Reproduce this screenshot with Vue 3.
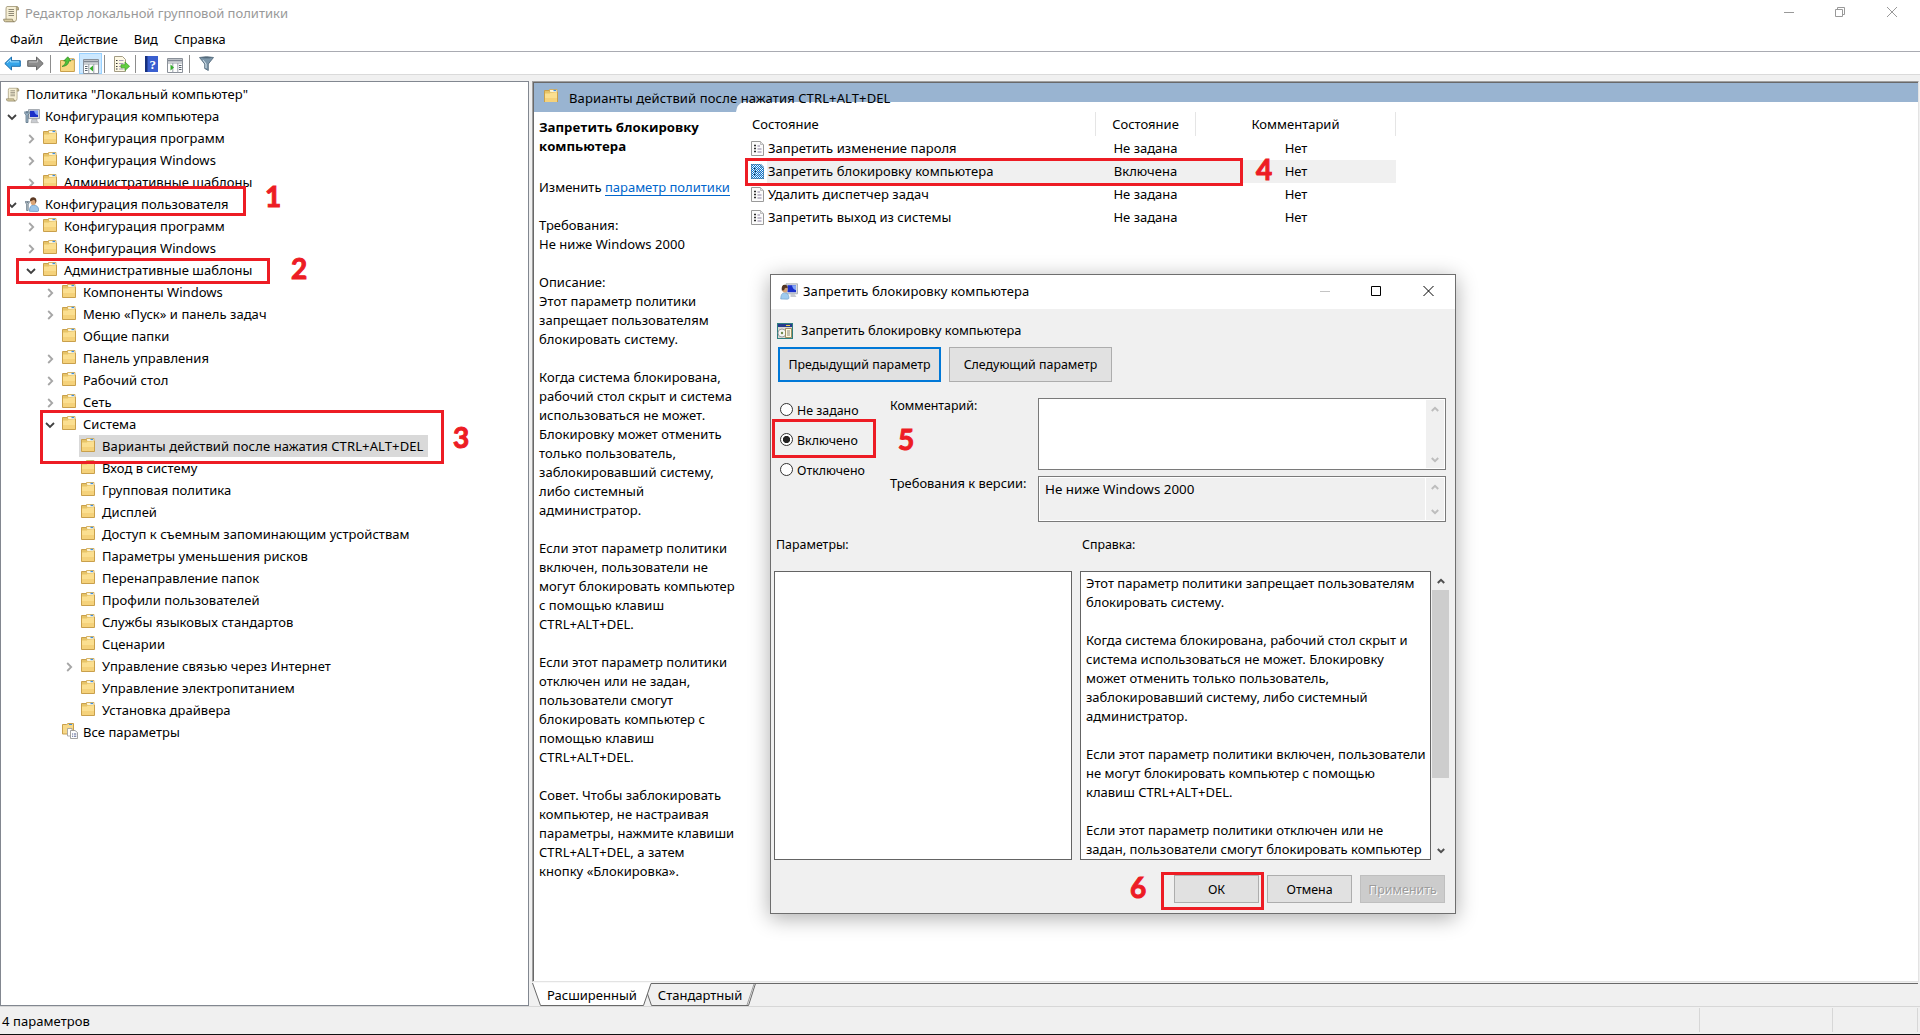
<template>
    <div class="window">
        <!-- Icon sprites -->
        <svg class="sprites" width="0" height="0">
            <symbol id="scroll" viewBox="0 0 16 18">
                <path d="M4 1.500h9.500q2 0 2 2v1.300h-2V14q0 2.500-2 2.500H3V4q0-2.500 1-2.500z" fill="#f6efd5" stroke="#9c9170" stroke-width=".8" />
                <path d="M13.400 1.500q2.100.2 2.100 3.200h-2.200z" fill="#c9bd92" stroke="#8d8262" stroke-width=".6" />
                <path d="M.6 14.200h8.800q0 2.600 2 2.600H2.500q-1.900 0-1.900-2.600z" fill="#d9cda3" stroke="#8d8262" stroke-width=".8" />
                <path d="M5.500 4.500h5.500M5.500 6.500h5.500M5.500 8.500h5.500M5.500 10.500h5.500" stroke="#8f8a78" stroke-width="1" />
            </symbol>
            <symbol id="folder" viewBox="0 0 14 14">
                <path d="M.5 1.500h5.200l1 1.500h6.800v10.500H.5z" fill="#e7c467" stroke="#c9a04c" />
                <path d="M5.500 2.800V.5h7.500v3" fill="#fff6d8" stroke="#d3ab58" stroke-width=".9" />
                <path d="M9.500 1.500h2.500" stroke="#3f8fe0" stroke-width="1.300" />
                <path d="M1 4.500h4.800l.8-1h6.400v9.500H1z" fill="#fbdf90" />
                <path d="M1 9h12v4H1z" fill="#f5d27b" />
            </symbol>
            <symbol id="allset" viewBox="0 0 16 16">
                <path d="M.5 1.500h4L6 .5h5.500v10.500H.5z" fill="#f7d98a" stroke="#c9a04c" />
                <path d="M7 1.500h3" stroke="#3f8fe0" />
                <path d="M5.500 5.500h4.500v7.500H5.500z" fill="#fff" stroke="#999" stroke-width=".8" />
                <path d="M8.500 7.500h4.500l2.500 2v6h-7z" fill="#fff" stroke="#8c8c8c" stroke-width=".8" />
                <path d="M10 11h1.200M12 11h2.300M10 13.200h1.200M12 13.200h2.300" stroke="#4e5a8c" />
            </symbol>
            <symbol id="pc" viewBox="0 0 16 15">
                <path d="M4.500.6h11v9h-11z" fill="#d5d8dc" stroke="#8b929c" stroke-width=".8" />
                <path d="M6 1.800h8v6.200H6z" fill="#1b2fc8" />
                <path d="M10 1.800h4v4.200q-3 0-4-4.200z" fill="#7fa0f5" />
                <path d="M8 10h5v2.200l1.500 1.500H7z" fill="#c9ccd1" stroke="#9a9a9a" stroke-width=".5" />
                <path d="M.8 2.500v2.300l1.200 1v7.700h2V5.800l1.200-1V2.500M2.300 2v2h1.400V2" fill="#9fb6c8" stroke="#5a7184" stroke-width=".8" />
            </symbol>
            <symbol id="user" viewBox="0 0 14 15">
                <path d="M4.500 14.300q-.3-5.800 4-6.300 5 .4 5.200 5 0 1.500-1.500 1.500z" fill="#9cc6ea" stroke="#5d8fbb" stroke-width=".7" />
                <ellipse cx="8.300" cy="4.700" rx="2.700" ry="3.400" fill="#d9a577" />
                <path d="M5 4.500q-.3-4.200 3.500-4.200 3.300.3 2.900 4.500l-.9 1.600q.2-3-1.500-3.600z" fill="#5c3a24" />
                <path d="M.6 4v2l1 1v6.500h1.600V7l1-1V4M1.900 4v1.500h1V4" fill="#b8c4cc" stroke="#5a6b78" stroke-width=".7" />
            </symbol>
            <symbol id="userpc" viewBox="0 0 18 17">
                <path d="M6 .8h11.500v10H6z" fill="#d8dbe0" stroke="#9ea4ac" stroke-width=".8" />
                <path d="M7.500 2.200h8.500v7H7.500z" fill="#1a30cc" />
                <path d="M12 2.200h4v5q-3.500-1-4-5z" fill="#83a5f5" />
                <path d="M10.500 11h4l2 3h-6z" fill="#c8cbd0" />
                <path d="M.7 16q0-6 3.800-6.300 4.500.3 4.500 5.300 0 1-1.500 1.200z" fill="#9fcbef" stroke="#6d9cc7" stroke-width=".6" />
                <ellipse cx="4.800" cy="6" rx="2.700" ry="3.600" fill="#d7a173" />
                <path d="M1.800 7.500q-.8-5.800 3-5.800 3.200.3 2.800 3.600-3-1.800-3.500 2z" fill="#533724" />
            </symbol>
            <symbol id="setting" viewBox="0 0 13 15">
                <path d="M.5.5h9l3 3v11H.5z" fill="#fbfbfb" stroke="#9a9a9a" />
                <path d="M9.500.5v3h3" fill="#e3e3e3" stroke="#b0b0b0" stroke-width=".8" />
                <path d="M3 4.500h2M3 7.500h2M3 10.500h2" stroke="#2f2f2f" stroke-width="1.600" />
                <path d="M6.500 5h2.500M6.500 8h4M6.500 11h4" stroke="#8b80a0" />
            </symbol>
            <symbol id="panel" viewBox="0 0 16 15">
                <path d="M.5.5h15v14H.5z" fill="#fdfdfd" stroke="#8a9099" />
                <path d="M1 2.500h14" stroke="#7f8792" stroke-width="2" />
                <path d="M1 5h14M5.800 5v9.500M10.800 5v9.500" stroke="#9aa1aa" />
            </symbol>
            <pattern id="check" width="2" height="2" patternUnits="userSpaceOnUse">
                <path d="M0 0h1v1H0zM1 1h1v1H1z" fill="#0078d7" />
            </pattern>
        </svg>

        <header class="titlebar">
            <svg class="i-title"><use href="#scroll" /></svg>
            <span class="title">Редактор локальной групповой политики</span>
            <svg class="caption" width="114" height="12" fill="none" stroke="#999">
                <path d="M0 6.500h10M51.500 3.500h7v7h-7zM53.500 3.500v-2h7v7h-2M103 1l10 10M113 1l-10 10" />
            </svg>
        </header>

        <nav class="menubar">
            <span v-for="m in menu" :key="m">{{ m }}</span>
        </nav>

        <div class="toolbar">
            <svg width="17" height="15" viewBox="0 0 17 15">
                <path d="M.8 7.500L7.500 1v3.700h8.800v5.600H7.500V14z" fill="#35a5ea" stroke="#1d6fae" />
                <path d="M3 7l3.500-3.300v2.200H15" fill="none" stroke="#9ddcff" />
            </svg>
            <svg class="t-fwd" width="17" height="15" viewBox="0 0 17 15">
                <path d="M16.200 7.500L9.500 1v3.700H.7v5.600h8.800V14z" fill="#8d8d8d" stroke="#666" />
                <path d="M2 6h8.500V3.700" fill="none" stroke="#c2c2c2" />
            </svg>
            <i class="sep"></i>
            <svg class="t-up" width="15" height="16" viewBox="0 0 15 16">
                <path d="M.5 4.500h5l1-1.500h7.900v12.500H.5z" fill="#f8d882" stroke="#c9a04c" />
                <path d="M9 2.500h4.500v2H9z" fill="#fff3cf" stroke="#d3ab58" stroke-width=".7" />
                <path d="M11.500 3.500h2" stroke="#3f8fe0" />
                <path d="M2 10.500Q5.500 9 6 5H3.700L7.800.8 11 5H8.800Q8.500 10 2 10.500z" fill="#4fc23a" stroke="#2d8a22" stroke-width=".7" />
            </svg>
            <span class="t-on">
                <svg width="16" height="15" viewBox="0 0 16 15">
                    <use href="#panel" />
                    <path d="M2 7.500h2.500M2 9.500h2.500M2 11.500h2.500" stroke="#59636f" />
                    <path d="M10 6.500v6L6.500 9.500z" fill="#35ad2b" />
                </svg>
            </span>
            <i class="sep t-s2"></i>
            <svg class="t-exp" width="17" height="16" viewBox="0 0 17 16">
                <path d="M1.500.5h8l3 3v12h-11z" fill="#fdf8e4" stroke="#a39c84" />
                <path d="M3 4.500h1.500M3 7.500h1.500M3 10.500h1.500M3 13h1.500" stroke="#333" />
                <path d="M6 4.500h4.500M6 7.500h4.500M6 10.500h3M6 13h4.500" stroke="#a89fb8" />
                <path d="M8 8.700h4V6l4.600 4.300-4.600 4.200v-2.700H8z" fill="#62d03f" stroke="#3c9a2b" stroke-width=".7" />
            </svg>
            <i class="sep t-s3"></i>
            <svg class="t-help" width="13" height="16" viewBox="0 0 13 16">
                <path d="M0 0h13v16H0z" fill="#3a5fd0" />
                <path d="M0 0h2.500v16H0z" fill="#16307f" />
                <text x="7.700" y="13" class="help-q">?</text>
            </svg>
            <svg class="t-show" width="16" height="15" viewBox="0 0 16 15">
                <use href="#panel" />
                <path d="M12 7.500h2.500M12 9.500h2.500M12 11.500h2.500" stroke="#59636f" />
                <path d="M3.500 6.500v6L7 9.500z" fill="#35ad2b" />
            </svg>
            <i class="sep t-s4"></i>
            <svg class="t-filter" width="15" height="15" viewBox="0 0 15 15">
                <path d="M.5 1.500q7-1.700 14 0L9.300 8v6.500l-3.600-2V8z" fill="#7d97aa" stroke="#4b6273" stroke-width=".8" />
                <path d="M1.800 1.700q5.500-1 11.400 0-5.500 1.300-11.400 0z" fill="#45596a" />
                <path d="M4.200 4.200L7 8v4" fill="none" stroke="#dbe8f0" />
            </svg>
        </div>

        <main class="body">
            <!-- Policy tree -->
            <section class="tree">
                <div v-for="(n, i) in tree" :key="i" class="node" :class="['lv' + n[0], { sel: n[4] }]">
                    <svg class="chev" width="10" height="10" viewBox="0 0 10 10" fill="none">
                        <path v-if="n[1] === 'open'" d="M1 3l4 4 4-4" stroke="#404040" stroke-width="1.800" />
                        <path v-if="n[1] === 'shut'" d="M3.200 1l4 4-4 4" stroke="#a6a6a6" stroke-width="1.800" />
                    </svg>
                    <svg class="ico" :class="'ico-' + n[2]"><use :href="'#' + n[2]" /></svg>
                    <span class="label">{{ n[3] }}</span>
                </div>
            </section>

            <section class="pane">
                <div class="pane-main">
                    <div class="band">
                        <svg class="ico-folder"><use href="#folder" /></svg>
                        <span>Варианты действий после нажатия CTRL+ALT+DEL</span>
                    </div>
                    <div class="cols">
                        <div class="info">
                            <svg class="corner" width="7" height="10"><path d="M0 0h7Q1 2 0 10z" fill="#99b4d1" /></svg>
                            <h2>Запретить блокировку<br>компьютера</h2>
                            <p class="edit">Изменить <a>параметр политики</a></p>
                            <p class="desc">{{ description }}</p>
                        </div>
                        <div class="list">
                            <div class="row head">
                                <span class="c1">Состояние</span>
                                <span class="c2">Состояние</span>
                                <span class="c3">Комментарий</span>
                            </div>
                            <div v-for="p in policies" :key="p.name" class="row" :class="{ active: p.active }">
                                <span class="c1">
                                    <svg class="ico-setting" viewBox="0 0 13 15">
                                        <use href="#setting" />
                                        <path v-if="p.active" d="M0 0h10l3 3v12H0z" fill="url(#check)" />
                                    </svg>
                                    <b>{{ p.name }}</b>
                                </span>
                                <span class="c2">{{ p.state }}</span>
                                <span class="c3">Нет</span>
                            </div>
                        </div>
                    </div>
                </div>
                <div class="tabs">
                    <svg class="tab-lines" width="1387" height="25" fill="none">
                        <path d="M1 1.500L8.500 23.500H111.500L119 .500H1z" fill="#fff" />
                        <path d="M119 1.500L115 12L119.500 23.500H216L223 1.500z" fill="#f0f0f0" />
                        <path d="M.5 1L8.500 23.500H111.500L119 1.500H1386M115.500 12L119.500 23.500H216.500L223.500 1.500" stroke="#696969" />
                        <path d="M215 23L222 2" stroke="#a0a0a0" />
                    </svg>
                    <span>Расширенный</span>
                    <span>Стандартный</span>
                </div>
            </section>
        </main>

        <footer class="status">
            <span class="st-text">4 параметров</span>
            <i class="st1"></i>
            <i class="st2"></i>
        </footer>

        <!-- Policy dialog -->
        <div class="dialog">
            <div class="d-title">
                <svg width="18" height="17"><use href="#userpc" /></svg>
                <span>Запретить блокировку компьютера</span>
                <svg class="d-caption" width="114" height="12" fill="none">
                    <path d="M0 6.500h10" stroke="#c4c4c4" />
                    <path d="M51.500 1.500h9v9h-9zM103.500 1l10 10M113.500 1l-10 10" stroke="#000" />
                </svg>
            </div>
            <div class="d-name">
                <svg width="16" height="16" viewBox="0 0 16 16">
                    <path d="M0 0h16v16H0z" fill="#2f7f80" />
                    <path d="M1 2h14v13H1z" fill="#d9d7d2" />
                    <path d="M1 1h14v3H1z" fill="#283a8c" />
                    <path d="M9 2.500h4" stroke="#e9d44a" />
                    <circle cx="5" cy="10" r="4" fill="#f5f5f5" stroke="#8b8b8b" stroke-width=".8" />
                    <circle cx="5" cy="10" r="1.200" fill="#6c8a4a" />
                    <path d="M8.500 5.500h6v9h-6z" fill="#fff8dc" stroke="#8c7a45" stroke-width=".8" />
                    <path d="M10 8h3M10 10h3M10 12h3" stroke="#6b6b6b" stroke-width=".8" />
                </svg>
                <span>Запретить блокировку компьютера</span>
            </div>
            <div class="d-nav">
                <button type="button" class="btn focus">Предыдущий параметр</button>
                <button type="button" class="btn">Следующий параметр</button>
            </div>
            <div class="d-form">
                <div class="radios">
                    <label v-for="r in radios" :key="r"><i :class="{ on: r === 'Включено' }"></i>{{ r }}</label>
                </div>
                <div class="d-fields">
                    <div class="field f-comment">
                        <span>Комментарий:</span>
                        <div class="area">
                            <div class="scroll"><svg width="8" height="6"><path d="M.8 5L4 1.800 7.200 5" /></svg><svg width="8" height="6"><path d="M.8 1L4 4.200 7.200 1" /></svg></div>
                        </div>
                    </div>
                    <div class="field f-req">
                        <span>Требования к версии:</span>
                        <div class="area ro">
                            <em>Не ниже Windows 2000</em>
                            <div class="scroll"><svg width="8" height="6"><path d="M.8 5L4 1.800 7.200 5" /></svg><svg width="8" height="6"><path d="M.8 1L4 4.200 7.200 1" /></svg></div>
                        </div>
                    </div>
                </div>
            </div>
            <div class="d-heads">
                <span>Параметры:</span>
                <span>Справка:</span>
            </div>
            <div class="d-boxes">
                <div class="box-left"></div>
                <div class="box-help">{{ help }}</div>
                <div class="scroll big">
                    <svg width="8" height="6"><path d="M.8 5L4 1.800 7.200 5" /></svg>
                    <div class="thumb"></div>
                    <svg width="8" height="6"><path d="M.8 1L4 4.200 7.200 1" /></svg>
                </div>
            </div>
            <div class="d-actions">
                <button type="button" class="btn">ОК</button>
                <button type="button" class="btn">Отмена</button>
                <button type="button" class="btn off">Применить</button>
            </div>
        </div>

        <!-- Numbered step marks over the window -->
        <template v-for="n in 6" :key="n">
            <div class="mark" :class="'mark' + n"></div>
            <div class="num" :class="'num' + n">{{ n }}</div>
        </template>
    </div>
</template>

<script setup>
const menu = ['Файл', 'Действие', 'Вид', 'Справка'];

// [level, chevron, icon, label, selected]
const tree = [
    [0, '', 'scroll', 'Политика "Локальный компьютер"'],
    [1, 'open', 'pc', 'Конфигурация компьютера'],
    [2, 'shut', 'folder', 'Конфигурация программ'],
    [2, 'shut', 'folder', 'Конфигурация Windows'],
    [2, 'shut', 'folder', 'Административные шаблоны'],
    [1, 'open', 'user', 'Конфигурация пользователя'],
    [2, 'shut', 'folder', 'Конфигурация программ'],
    [2, 'shut', 'folder', 'Конфигурация Windows'],
    [2, 'open', 'folder', 'Административные шаблоны'],
    [3, 'shut', 'folder', 'Компоненты Windows'],
    [3, 'shut', 'folder', 'Меню «Пуск» и панель задач'],
    [3, '', 'folder', 'Общие папки'],
    [3, 'shut', 'folder', 'Панель управления'],
    [3, 'shut', 'folder', 'Рабочий стол'],
    [3, 'shut', 'folder', 'Сеть'],
    [3, 'open', 'folder', 'Система'],
    [4, '', 'folder', 'Варианты действий после нажатия CTRL+ALT+DEL', true],
    [4, '', 'folder', 'Вход в систему'],
    [4, '', 'folder', 'Групповая политика'],
    [4, '', 'folder', 'Дисплей'],
    [4, '', 'folder', 'Доступ к съемным запоминающим устройствам'],
    [4, '', 'folder', 'Параметры уменьшения рисков'],
    [4, '', 'folder', 'Перенаправление папок'],
    [4, '', 'folder', 'Профили пользователей'],
    [4, '', 'folder', 'Службы языковых стандартов'],
    [4, '', 'folder', 'Сценарии'],
    [4, 'shut', 'folder', 'Управление связью через Интернет'],
    [4, '', 'folder', 'Управление электропитанием'],
    [4, '', 'folder', 'Установка драйвера'],
    [3, '', 'allset', 'Все параметры']
];

const policies = [
    { name: 'Запретить изменение пароля', state: 'Не задана' },
    { name: 'Запретить блокировку компьютера', state: 'Включена', active: true },
    { name: 'Удалить диспетчер задач', state: 'Не задана' },
    { name: 'Запретить выход из системы', state: 'Не задана' }
];

const radios = ['Не задано', 'Включено', 'Отключено'];

const description = `Требования:
Не ниже Windows 2000

Описание:
Этот параметр политики
запрещает пользователям
блокировать систему.

Когда система блокирована,
рабочий стол скрыт и система
использоваться не может.
Блокировку может отменить
только пользователь,
заблокировавший систему,
либо системный
администратор.

Если этот параметр политики
включен, пользователи не
могут блокировать компьютер
с помощью клавиш
CTRL+ALT+DEL.

Если этот параметр политики
отключен или не задан,
пользователи смогут
блокировать компьютер с
помощью клавиш
CTRL+ALT+DEL.

Совет. Чтобы заблокировать
компьютер, не настраивая
параметры, нажмите клавиши
CTRL+ALT+DEL, а затем
кнопку «Блокировка».`;

const help = `Этот параметр политики запрещает пользователям
блокировать систему.

Когда система блокирована, рабочий стол скрыт и
система использоваться не может. Блокировку
может отменить только пользователь,
заблокировавший систему, либо системный
администратор.

Если этот параметр политики включен, пользователи
не могут блокировать компьютер с помощью
клавиш CTRL+ALT+DEL.

Если этот параметр политики отключен или не
задан, пользователи смогут блокировать компьютер`;
</script>

<style>
body { margin: 0; overflow: hidden; }
</style>

<style scoped>
* { box-sizing: border-box; }
.window {
    position: relative;
    display: flex;
    flex-direction: column;
    width: 1920px;
    height: 1035px;
    background: #f0f0f0;
    color: #000;
    font: 13px/19px "Noto Sans", "Open Sans", sans-serif;
    white-space: nowrap;
    overflow: hidden;
}
.sprites { position: absolute; }
svg { display: block; flex: none; }
p, h2 { margin: 0; }

/* Title, menu, toolbar */
.titlebar {
    display: flex;
    align-items: flex-start;
    height: 28px;
    padding: 5px 22px 0 3px;
    background: #fff;
    color: #999;
}
.i-title { width: 16px; height: 18px; }
.title { margin: -1px 0 0 6px; }
.caption { margin: 1px 0 0 auto; }
.menubar {
    display: flex;
    gap: 16px;
    height: 24px;
    padding: 2px 10px 0;
    background: #fff;
    border-bottom: 1px solid #a9abb2;
    font-size: 12.800px;
}
.toolbar {
    display: flex;
    align-items: center;
    height: 23px;
    padding: 1px 0 0 4px;
    background: #fff;
    border-bottom: 1px solid #dadada;
}
.sep { width: 1px; height: 18px; margin-left: 6px; background: #8d8d8d; }
.t-fwd { margin-left: 6px; }
.t-up { margin-left: 9px; }
.t-on {
    width: 23px;
    height: 21px;
    margin-left: 4px;
    padding: 5px 0 0 3px;
    background: #cce8ff;
    border: 1px solid #99d1ff;
}
.t-s2 { margin-left: 2px; }
.t-exp { margin-left: 8px; }
.t-s3 { margin-left: 5px; }
.t-help { margin-left: 9px; }
.help-q { font: 700 13px "Liberation Serif", serif; fill: #fff; text-anchor: middle; }
.t-show { margin: 3px 0 0 9px; }
.t-s4 { margin-left: 6px; }
.t-filter { margin-left: 9px; }

/* Tree */
.body { display: flex; height: 931px; padding-top: 6px; }
.tree {
    width: 529px;
    height: 925px;
    padding-top: 1px;
    background: #fff;
    border: 1px solid #828790;
}
.node { display: flex; align-items: center; height: 22px; }
.chev { margin: 1px 0 0 6px; }
.ico { margin-left: 7px; }
.label { margin-left: 7px; letter-spacing: .04px; }
.lv0 .chev { display: none; }
.lv0 .ico { margin-left: 4px; }
.lv0 .label { margin-left: 6px; letter-spacing: .08px; }
.lv2 { padding-left: 19px; }
.lv3 { padding-left: 38px; }
.lv4 { padding-left: 57px; }
.ico-scroll { width: 15px; height: 15px; }
.ico-folder { width: 14px; height: 14px; margin-top: -3px; }
.ico-pc { width: 16px; height: 15px; }
.ico-pc + .label { margin-left: 5px; }
.ico-user { width: 14px; height: 15px; margin-left: 8px; }
.ico-user + .label { margin-left: 6px; }
.ico-allset { width: 16px; height: 16px; margin-top: -3px; }
.ico-allset + .label { margin-left: 5px; }
.lv4.sel {
    width: 349px;
    margin-left: 78px;
    padding-left: 2px;
    background: #d9d9d9;
}
.sel .chev { display: none; }
.sel .ico { margin-left: 0; }
.sel .label, .band { letter-spacing: .12px; }

/* Right pane */
.pane { width: 1387px; margin-left: 3px; }
.pane-main {
    height: 901px;
    background: #fff;
    border: 1px solid #a0a0a0;
    border-right-color: #e3e3e3;
    border-bottom-color: #e3e3e3;
    box-shadow: inset 1px 1px #696969;
    padding: 1px 0 0 1px;
}
.band { display: flex; height: 19px; padding: 6px 0 0 10px; background: #99b4d1; }
.band .ico-folder { margin-top: 0; }
.band span { position: relative; margin-left: 11px; z-index: 1; }
.cols { display: flex; }
.info {
    position: relative;
    width: 202px;
    margin-right: 7px;
    padding: 6px 0 0 5px;
    border-top: 10px solid #99b4d1;
}
.corner { position: absolute; top: -10px; left: 202px; }
.info h2 { font: 700 13.2px/19px "Open Sans", sans-serif; }
.edit { margin-top: 22px; }
.edit a { color: #0066cc; border-bottom: 1px solid #0066cc; display: inline-block; line-height: 15px; }
.desc { margin-top: 19px; white-space: pre; letter-spacing: .04px; }
.list { width: 653px; padding-top: 10px; }
.row { display: flex; height: 23px; align-items: center; }
.row b { font-weight: 400; letter-spacing: .05px; }
.c1 { display: flex; align-items: center; gap: 4px; width: 352px; padding-left: 8px; }
.c2 { width: 101px; text-align: center; }
.c3 { width: 200px; text-align: center; }
.head { height: 24px; margin-bottom: 1px; }
.head span { height: 24px; line-height: 24px; border-right: 1px solid #e5e5e5; }
.head .c1 { padding-left: 9px; width: 353px; }
.head .c2 { width: 100px; }
.active { background: linear-gradient(#f0f0f0, #f0f0f0) 24px 0 no-repeat; }
.ico-setting { width: 13px; height: 15px; margin-top: -1px; }

/* Tabs */
.tabs {
    position: relative;
    display: flex;
    gap: 21px;
    height: 24px;
    padding: 4px 0 0 15px;
}
.tab-lines { position: absolute; left: 0; top: 0; }
.tabs span { position: relative; }

/* Status bar */
.status {
    position: relative;
    display: flex;
    height: 29px;
    border-top: 1px solid #d7d7d7;
    border-bottom: 1px solid #111;
    padding: 1px 2px 2px 2px;
}
.st-text { width: 1697px; padding-top: 4px; letter-spacing: .08px; }
.status i { border-left: 1px solid #d7d7d7; }
.st1 { width: 133px; }
.st2 { width: 86px; border-right: 1px solid #d7d7d7; }

/* Dialog */
.dialog {
    position: absolute;
    left: 770px;
    top: 274px;
    width: 686px;
    height: 640px;
    background: #f0f0f0;
    border: 1px solid #6e6e6e;
    box-shadow: 0 4px 20px rgba(0, 0, 0, .33);
    font-size: 12.4px;
}
.d-title {
    display: flex;
    align-items: flex-start;
    height: 34px;
    padding: 8px 21px 0 9px;
    background: #fff;
    font-size: 13px;
}
.d-title span { margin: -1px 0 0 5px; letter-spacing: .08px; }
.d-caption { margin: 2px 0 0 auto; }
.d-name { display: flex; height: 38px; padding: 14px 0 0 6px; font-size: 12.800px; }
.d-name span { margin: -2px 0 0 8px; }
.d-nav { display: flex; gap: 8px; padding-left: 7px; }
.btn {
    width: 163px;
    height: 35px;
    padding: 0;
    background: #e1e1e1;
    border: 1px solid #adadad;
    font: inherit;
    color: #000;
}
.btn.focus { border: 2px solid #0078d7; }
.d-form { display: flex; height: 147px; padding-top: 16px; }
.radios { width: 119px; padding: 2px 0 0 9px; }
.radios label { display: flex; align-items: center; height: 30px; margin-top: -5px; margin-bottom: 5px; gap: 4px; }
.radios i { width: 13px; height: 13px; margin-top: -1px; border: 1px solid #333; border-radius: 50%; background: #fff; }
.radios i.on { background: radial-gradient(circle, #222 3.300px, #fff 3.900px); }
.field { display: flex; justify-content: space-between; width: 556px; }
.f-comment { height: 78px; }
.area {
    display: flex;
    justify-content: flex-end;
    width: 408px;
    height: 72px;
    padding: 1px;
    background: #fff;
    border: 1px solid #7a7a7a;
}
.field > span { margin-top: -2px; }
.f-req > span { font-size: 12.900px; }
.f-req .area { height: 46px; }
.area em { flex: 1; padding: 2px 0 0 5px; background: #f0f0f0; font-style: normal; font-size: 13.400px; }
.area.ro .scroll { margin-left: 1px; }
.scroll {
    display: flex;
    flex-direction: column;
    justify-content: space-between;
    align-items: center;
    width: 18px;
    padding: 6px 0 5px;
    background: #f0f0f0;
}
.scroll path { fill: none; stroke: #bdbdbd; stroke-width: 2; }
.d-heads { display: flex; padding-left: 5px; margin-top: 6px; height: 36px; }
.d-heads span { width: 306px; }
.d-boxes { display: flex; padding-left: 3px; height: 289px; }
.box-left { width: 298px; margin-right: 8px; background: #fff; border: 1px solid #646464; }
.box-help {
    width: 351px;
    padding: 2px 0 0 5px;
    background: #fff;
    border: 1px solid #646464;
    font-size: 13px;
    white-space: pre;
    overflow: hidden;
}
.big { width: 17px; margin-left: 1px; padding: 7px 0 6px; justify-content: flex-start; }
.big path { stroke: #505050; }
.thumb { width: 17px; height: 188px; margin: 6px 0 70px; background: #cdcdcd; }
.d-actions { display: flex; gap: 8px; padding: 15px 0 0 403px; }
.d-actions .btn { width: 85px; height: 28px; }
.btn.off { background: #ccc; border-color: #bfbfbf; color: #9c9c9c; text-shadow: 1px 1px #fff; }

/* Step marks */
.mark { position: absolute; border: 3px solid #ed1c24; }
.mark1 { left: 7px; top: 186px; width: 239px; height: 30px; }
.mark2 { left: 16px; top: 258px; width: 254px; height: 26px; }
.mark3 { left: 40px; top: 410px; width: 404px; height: 54px; }
.mark4 { left: 745px; top: 158px; width: 498px; height: 28px; }
.mark5 { left: 772px; top: 419px; width: 104px; height: 39px; }
.mark6 { left: 1161px; top: 872px; width: 103px; height: 38px; }
.num {
    position: absolute;
    width: 20px;
    text-align: center;
    font: 700 28px/28px Lato, sans-serif;
    color: #ed1c24;
    -webkit-text-stroke: 1px #ed1c24;
}
.num1 { left: 263px; top: 182px; }
.num2 { left: 289px; top: 254px; }
.num3 { left: 451px; top: 423px; }
.num4 { left: 1254px; top: 155px; }
.num5 { left: 896px; top: 425px; }
.num6 { left: 1128px; top: 873px; }
</style>
